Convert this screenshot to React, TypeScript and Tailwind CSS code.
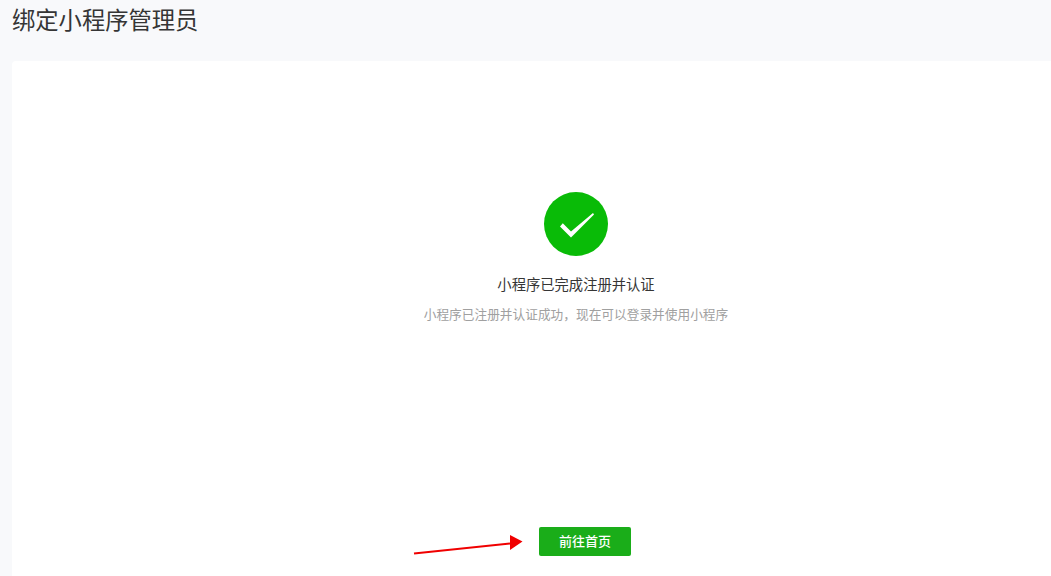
export default function App() {
  return (
    <div className="h-[576px] w-[1051px] overflow-hidden bg-[#f8f9fb] pl-3 font-['Liberation_Sans','Noto_Sans_CJK_SC',sans-serif]">
      <h1 className="h-[61px] pt-[5px] text-[23.3px] leading-[32px] font-normal text-[#353535]">绑定小程序管理员</h1>
      <div className="relative flex h-[515px] w-[1128px] flex-col items-center rounded-tl-[4px] bg-white pt-[131px]">
        <div className="h-16 w-16 rounded-full bg-[#09bb07]">
          <svg width="64" height="64" viewBox="0 0 64 64" fill="none">
            <path d="M16 34.5 L18.8 31.2 L27 39.6 L49 21 L50 22.5 L27 45.5 Z" fill="white" />
          </svg>
        </div>
        <p className="mt-[19px] text-[14.3px] leading-5 text-[#353535]">小程序已完成注册并认证</p>
        <p className="mt-[10px] text-[12.7px] leading-5 text-[#a0a0a0]">小程序已注册并认证成功，现在可以登录并使用小程序</p>
        <button className="mt-[202px] ml-[18px] h-[29px] w-[92px] rounded-[2px] bg-[#1aad19] text-[13px] font-medium text-white">前往首页</button>
        <svg className="absolute top-[466px] left-[400px]" width="112" height="34" viewBox="0 0 112 34" fill="none">
          <path d="M2 26.5 L98 16.5" stroke="#f00000" strokeWidth="2" />
          <path d="M98 8 L110.5 14.5 L98 23 Z" fill="#f00000" />
        </svg>
      </div>
    </div>
  );
}
